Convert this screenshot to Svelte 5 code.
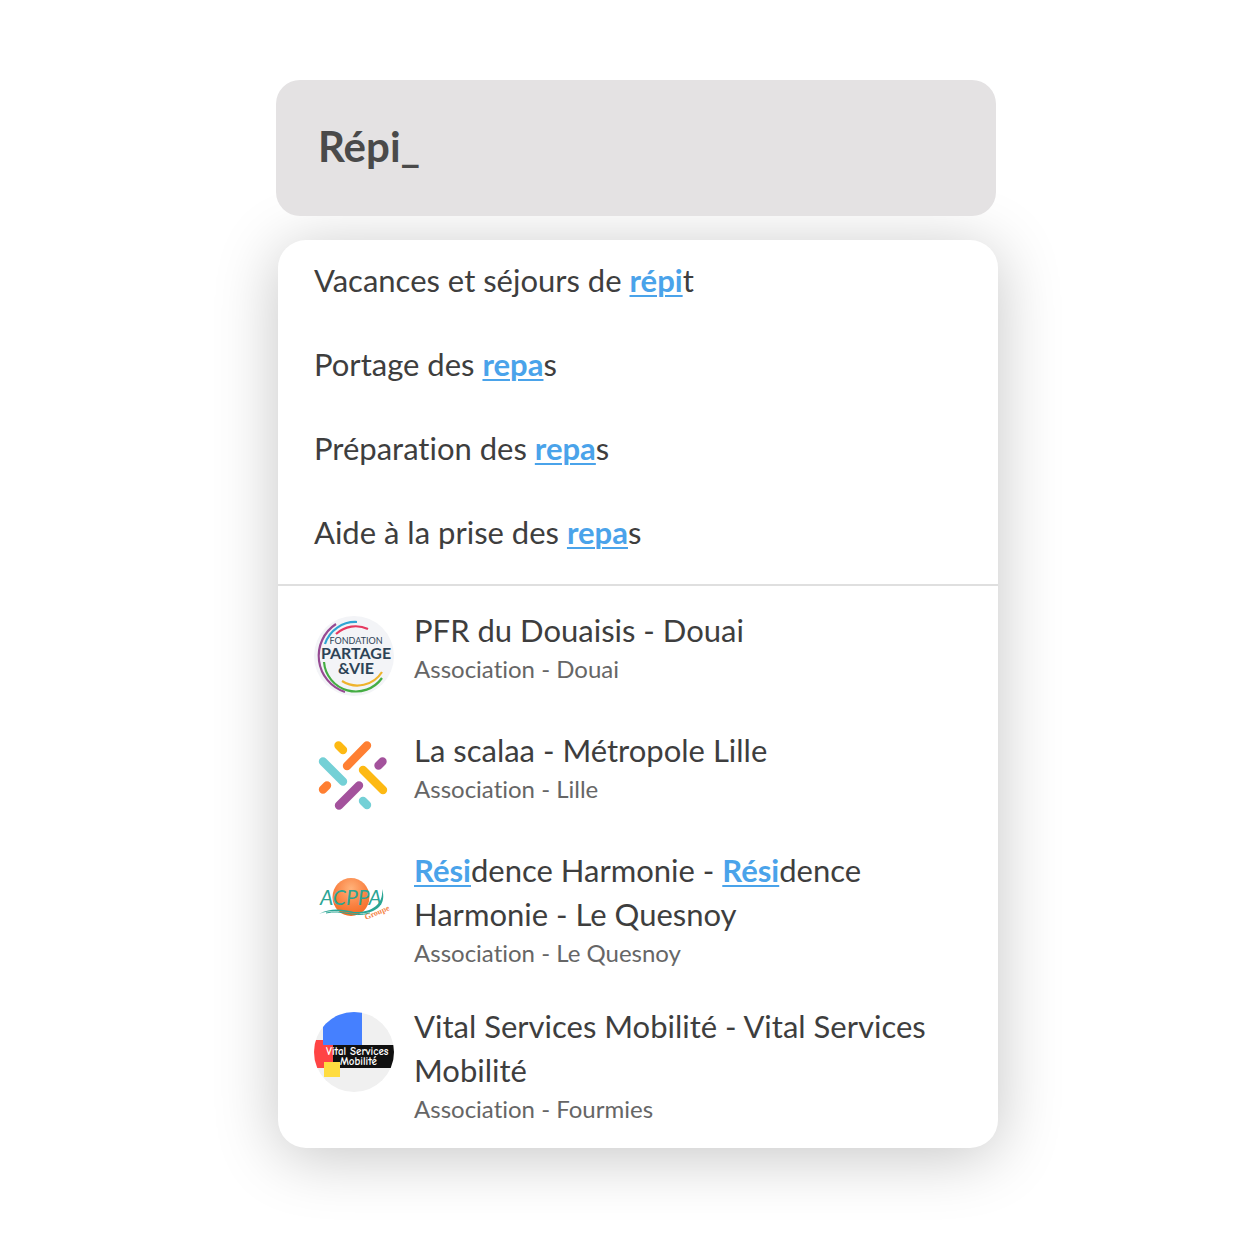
<script>
  let query = $state('Répi_');

  const suggestions = [
    [{ text: 'Vacances et séjours de ' }, { text: 'répi', hit: true }, { text: 't' }],
    [{ text: 'Portage des ' }, { text: 'repa', hit: true }, { text: 's' }],
    [{ text: 'Préparation des ' }, { text: 'repa', hit: true }, { text: 's' }],
    [{ text: 'Aide à la prise des ' }, { text: 'repa', hit: true }, { text: 's' }]
  ];

  const places = [
    { logo: 'partage', title: [{ text: 'PFR du Douaisis - Douai' }], detail: 'Association - Douai' },
    { logo: 'scalaa', title: [{ text: 'La scalaa - Métropole Lille' }], detail: 'Association - Lille' },
    {
      logo: 'acppa',
      title: [
        { text: 'Rési', hit: true },
        { text: 'dence Harmonie - ' },
        { text: 'Rési', hit: true },
        { text: 'dence ' },
        { text: 'Harmonie - Le Quesnoy' }
      ],
      detail: 'Association - Le Quesnoy'
    },
    {
      logo: 'vital',
      title: [{ text: 'Vital Services Mobilité - Vital Services Mobilité' }],
      detail: 'Association - Fourmies'
    }
  ];
</script>

{#snippet rich(parts)}{#each parts as part}{#if part.hit}<mark>{part.text}</mark>{:else}{part.text}{/if}{/each}{/snippet}

{#snippet logo(name)}
  <svg class="logo" viewBox="0 0 80 80" aria-hidden="true">
    {#if name === 'partage'}
      <circle cx="40" cy="40" r="40" fill="#f3f4f7" />
      <g fill="none" stroke-width="2.2">
        <path d="M22 8A38 38 0 0 0 31 76" stroke="#964a93" />
        <path d="M11 28A32 32 0 0 1 43 6" stroke="#2fa5d3" />
        <path d="M22 18A29 29 0 0 1 54 13" stroke="#e5395f" />
        <path d="M10 46A32 32 0 0 0 68 62" stroke="#45ad43" />
        <path d="M28 65A29 29 0 0 0 68 56" stroke="#efb32c" />
      </g>
      <g class="sans" fill="#2d4356" text-anchor="middle">
        <text x="42" y="28" font-size="9">FONDATION</text>
        <text x="42" y="43" font-size="16" font-weight="700">PARTAGE</text>
        <text x="42" y="58" font-size="16" font-weight="700">&amp;VIE</text>
      </g>
    {:else if name === 'scalaa'}
      <g fill="none" stroke-width="8.4" stroke-linecap="round">
        <path d="M24.5 9.5l4.5 4.5M49 34l20 20" stroke="#fdb913" />
        <path d="M53 9.5l-20 20.500M13 49.5l-4 4" stroke="#ff7f32" />
        <path d="M9 25.5l20 20M49 65l4 4" stroke="#74d0d6" />
        <path d="M68.5 25.5l-4 4M45 49.5l-20 20" stroke="#a3529c" />
      </g>
    {:else if name === 'acppa'}
      <defs>
        <radialGradient id="sun" cx="50%" cy="28%" r="75%">
          <stop offset="0" stop-color="#ffb27a" />
          <stop offset="0.55" stop-color="#fa8445" />
          <stop offset="1" stop-color="#f4691f" />
        </radialGradient>
      </defs>
      <ellipse cx="37" cy="41" rx="18.5" ry="19" fill="url(#sun)" />
      <text class="sans" x="6" y="49" font-size="21" font-style="italic" fill="#2ba594">ACPPA</text>
      <path
        d="M5 58C18 51 30 54 40 56C55 57 70 50 68 33C73 48 63 58 44 57.5C32 57 20 52 5 58Z"
        fill="#2ba594"
      />
      <path d="M12 57C28 53 38 62 56 57" fill="none" stroke="#2ba594" />
      <text class="serif" x="52" y="64" font-size="8" font-weight="700" fill="#f58345" transform="rotate(-23 52 64)">Groupe</text>
    {:else}
      <defs>
        <clipPath id="disc"><circle cx="40" cy="40" r="40" /></clipPath>
      </defs>
      <g clip-path="url(#disc)">
        <path d="M0 0h80v80H0z" fill="#f0f0f0" />
        <path d="M9 0h39v34H9z" fill="#4580ff" />
        <path d="M0 28h9v5h10v23H0z" fill="#ff4444" />
        <path d="M19 33h61v23H19z" fill="#101010" />
        <path d="M10 50h16v15H10z" fill="#ffdc40" />
        <g class="hand" fill="#fff" font-weight="700">
          <text x="12" y="43" font-size="11">Vital Services</text>
          <text x="26" y="53" font-size="11">Mobilité</text>
        </g>
      </g>
    {/if}
  </svg>
{/snippet}

<main>
  <input class="search" type="text" aria-label="Rechercher" bind:value={query} />

  <div class="panel">
    <ul class="suggestions">
      {#each suggestions as parts}
        <li><a class="suggestion" href="#recherche">{@render rich(parts)}</a></li>
      {/each}
    </ul>
    <ul class="places">
      {#each places as place}
        <li>
          <a class="place" href="#fiche">
            {@render logo(place.logo)}
            <span class="text">
              <span class="title">{@render rich(place.title)}</span>
              <span class="detail">{place.detail}</span>
            </span>
          </a>
        </li>
      {/each}
    </ul>
  </div>
</main>

<style>
  :global(body) {
    margin: 0;
    background: #fff;
  }

  main {
    display: flex;
    flex-direction: column;
    gap: 24px;
    padding: 80px 242px 92px 276px;
    font-family: Lato, 'Liberation Sans', sans-serif;
    font-variant-ligatures: none;
    color: #3e3e3e;
  }

  .search {
    position: relative;
    z-index: 1;
    box-sizing: border-box;
    height: 136px;
    margin-right: 2px;
    padding: 0 42px 4px;
    border: 0;
    border-radius: 24px;
    outline: 0;
    background: #e4e2e3;
    color: #4a4a4a;
    font: inherit;
    font-size: 42px;
    font-weight: 700;
  }

  .panel {
    margin-left: 2px;
    border-radius: 28px;
    background: #fff;
    box-shadow: 0 8px 64px rgba(0, 0, 0, 0.23);
  }

  ul {
    margin: 0;
    padding: 0;
    list-style: none;
  }

  a {
    color: inherit;
    text-decoration: none;
  }

  .suggestions {
    padding-bottom: 8px;
    border-bottom: 2px solid #dfdfdf;
  }

  .suggestion {
    display: block;
    padding: 18px 36px 22px;
    font-size: 31px;
    line-height: 44px;
  }

  mark {
    background: none;
    color: #4aa3ea;
    font-weight: 700;
    text-decoration: underline;
    text-decoration-thickness: 2px;
    text-underline-offset: 3px;
  }

  .places {
    padding-top: 10px;
  }

  .place {
    display: flex;
    align-items: flex-start;
    gap: 20px;
    padding: 12px 36px 20px;
  }

  .logo {
    flex: none;
    width: 80px;
    height: 80px;
    margin-top: 8px;
  }

  .text {
    display: flex;
    flex-direction: column;
    padding-bottom: 2px;
  }

  .title {
    font-size: 31px;
    line-height: 44px;
  }

  .detail {
    color: #666;
    font-size: 24px;
    line-height: 34px;
  }

  .sans {
    font-family: Lato, sans-serif;
  }

  .serif {
    font-family: 'Liberation Serif', serif;
  }

  .hand {
    font-family: 'Comic Neue', 'DejaVu Sans', sans-serif;
  }
</style>
